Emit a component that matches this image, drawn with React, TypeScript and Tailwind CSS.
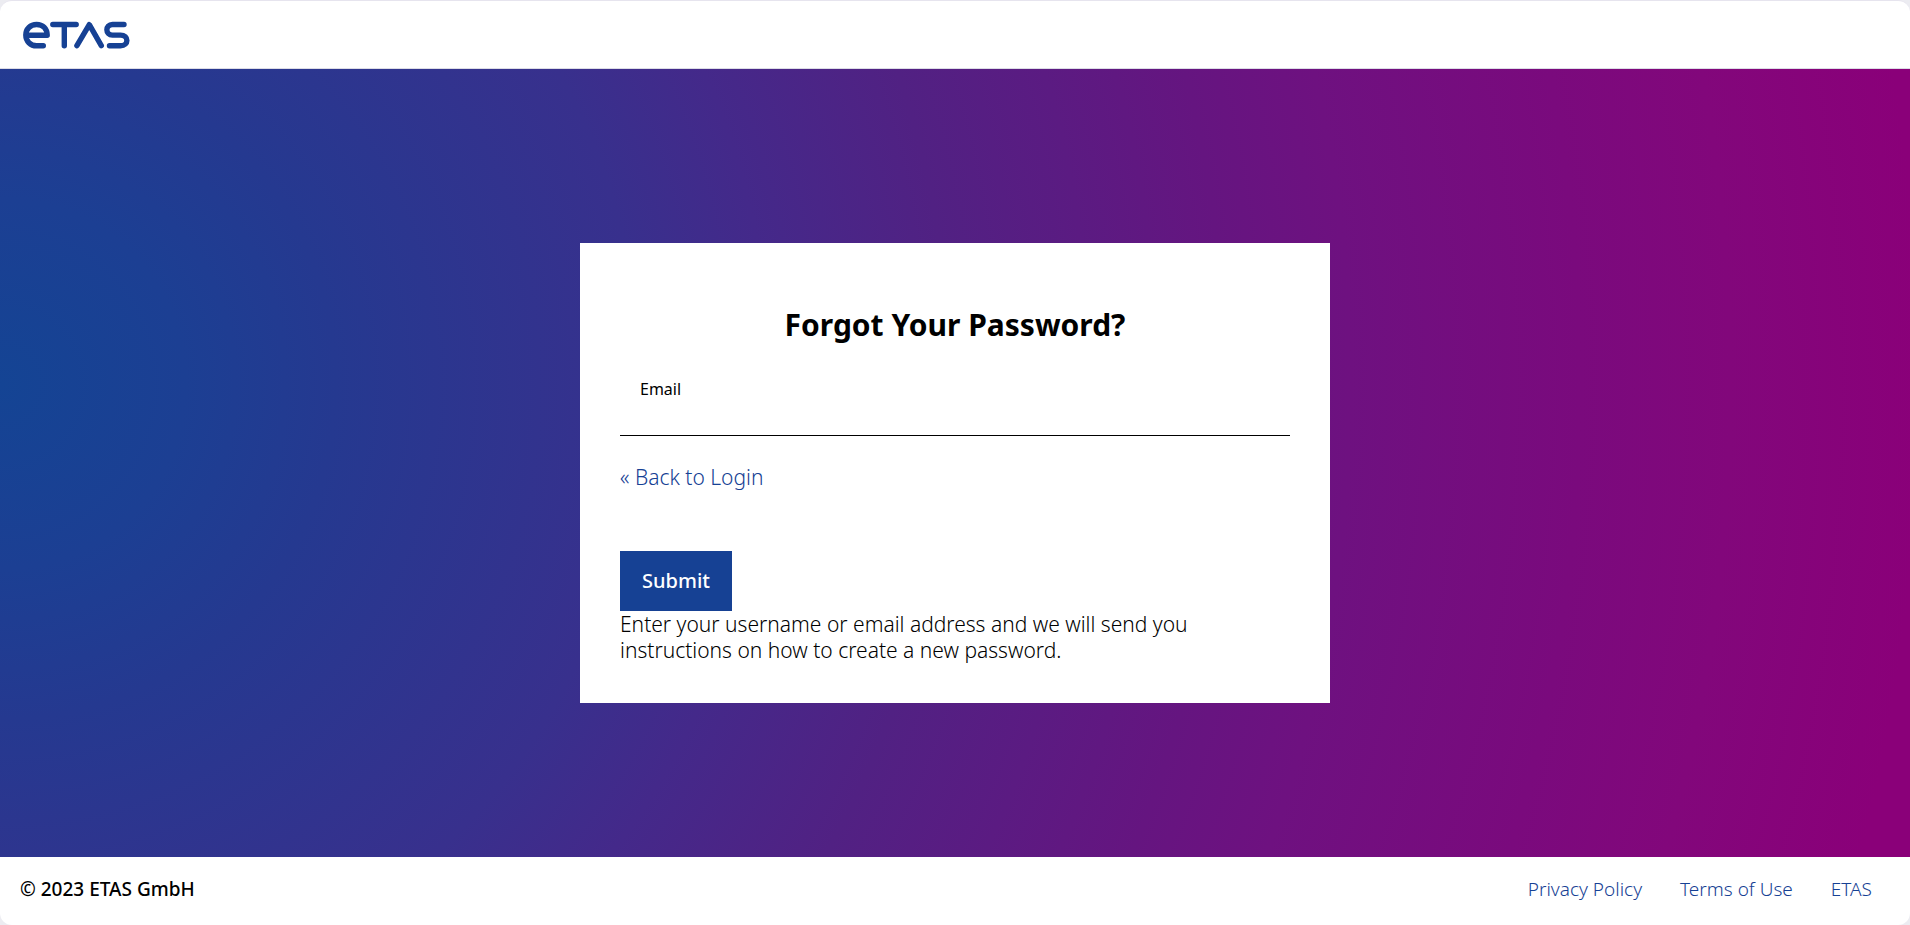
const footerLinks = ["Privacy Policy", "Terms of Use", "ETAS"];

function Logo() {
  return (
    <svg width="108" height="28" viewBox="0 0 108 28" fill="none" stroke="#164194" strokeWidth="5.4" strokeLinecap="round" strokeLinejoin="round" role="img" aria-label="ETAS">
      <path d="M4 14.200H25.200C25 7.400 20.600 3.500 14.600 3.500C8.400 3.500 3.800 8 3.800 14C3.800 20.200 8.400 24.800 14.600 24.800H21.300" />
      <path d="M30.800 3.500H54.200M42.300 3.500V24.800" />
      <path d="M54.900 24.600L67.300 3.700L79.300 24.600" />
      <path d="M102 3.500H90.500C83 3.500 83 14.100 90.500 14.100H98.500C107 14.100 107 24.800 98.500 24.800H87.500" />
    </svg>
  );
}

export default function App() {
  return (
    <div className="bg-[#ececf1]">
      <div className="flex min-h-screen flex-col overflow-hidden rounded-xl border-t border-[#e6e4ee] bg-white font-['Noto_Sans',sans-serif] text-black">
        <header className="flex h-17 items-center border-b border-[#dcdce6] px-[22px]">
          <a href="#" aria-label="ETAS home">
            <Logo />
          </a>
        </header>

        <main className="flex flex-1 items-center justify-center bg-[radial-gradient(circle_at_0%_40%,#144494_0px,#1c3f93_185px,#253990_335px,#38308d_640px,#44298a_770px,#512183_950px,#5b1b82_1090px,#651580_1225px,#6e1180_1350px,#7a0a7d_1580px,#82077b_1730px,#8a0079_1920px)] px-4 pt-13 pb-8">
          <section className="w-full max-w-[750px] bg-white px-10 pt-[60px] pb-10">
            <h1 className="text-center text-3xl leading-[44px] font-bold">Forgot Your Password?</h1>
            <form onSubmit={e => e.preventDefault()}>
              <div className="mt-[30px] border-b border-black">
                <label htmlFor="email" className="block px-5 text-base leading-6">Email</label>
                <input id="email" type="email" className="block h-[34px] w-full px-5 text-xl outline-none" />
              </div>
              <a href="#" className="mt-7 inline-block text-[21px] leading-[26px] font-light text-[#164194]">« Back to Login</a>
              <button type="submit" className="mt-[60px] block h-15 w-28 bg-[#164194] text-xl font-medium text-white">Submit</button>
            </form>
            <p className="text-[21px] leading-[26px] font-light">
              Enter your username or email address and we will send you instructions on how to create a new password.
            </p>
          </section>
        </main>

        <footer className="flex h-17 items-center justify-between px-5 pb-1 text-[19px]">
          <span className="font-medium">© 2023 ETAS GmbH</span>
          <nav className="flex gap-[38px] pr-[18px]">
            {footerLinks.map(link => (
              <a key={link} href="#" className="font-light text-[#164194]">{link}</a>
            ))}
          </nav>
        </footer>
      </div>
    </div>
  );
}
